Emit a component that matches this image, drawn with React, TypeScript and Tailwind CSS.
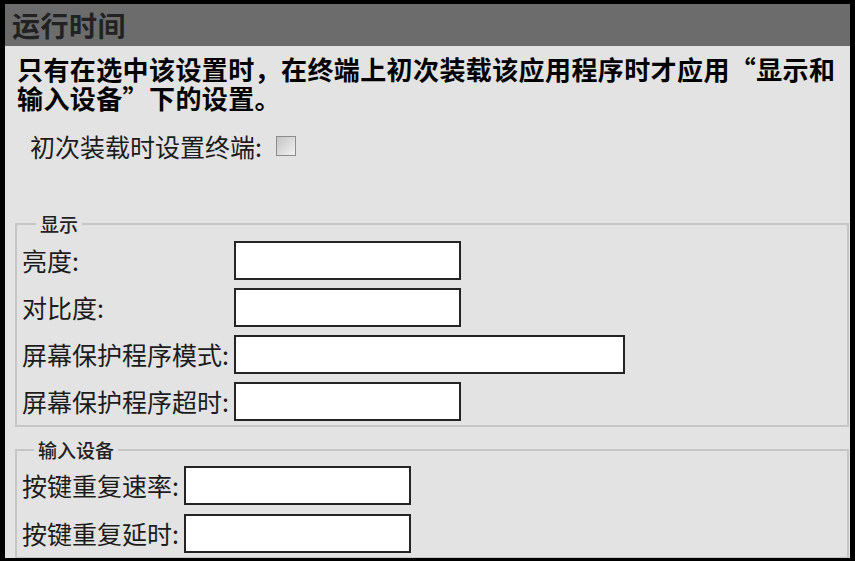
const font = { fontFamily: '"Noto Sans CJK SC", "Noto Sans", sans-serif' };

function Field({ label, wide }: { label: string; wide?: boolean }) {
  return (
    <>
      <div className="flex h-[39px] items-center whitespace-nowrap text-[25px] leading-none text-[#1c1c1c]">
        {label}:
      </div>
      <div className="flex h-[39px] items-center">
        <div
          className={`h-[39px] border-2 border-[#242424] bg-white ${wide ? 'w-[391px]' : 'w-[227px]'}`}
        />
      </div>
    </>
  );
}

export default function App() {
  return (
    <div
      className="h-[561px] w-[855px] overflow-hidden border-t-4 border-r-[5px] border-b-[3px] border-l-[5px] border-black bg-[#e3e3e3]"
      style={font}
    >
      {/* Title bar */}
      <div className="flex h-[42px] items-center bg-[#6c6c6c] pl-[7px] text-[28px] font-bold leading-none tracking-[0.5px] text-[#222]">
        运行时间
      </div>

      <p className="mt-[8px] pl-[12px] text-[26px] font-bold leading-[29px] tracking-[0.4px] text-black">
        只有在选中该设置时，在终端上初次装载该应用程序时才应用“显示和
        <br />
        输入设备”下的设置。
      </p>

      <div className="mt-[19px] flex h-[30px] items-center pl-[25px] text-[25px] leading-none text-[#1c1c1c]">
        <span>初次装载时设置终端:</span>
        <span className="ml-[14px] h-[20px] w-[20px] border border-[#8c8c8c] bg-gradient-to-br from-[#c4c4c4] to-[#f2f2f2]" />
      </div>

      {/* 显示 */}
      <fieldset className="mt-[52px] ml-[10px] mr-[1px] border-2 border-[#c6c6c6] pb-[4px] pl-[5px]">
        <legend className="ml-[14px] px-[4px] text-[19px] font-medium leading-[22px] text-[#222]">显示</legend>
        <div className="grid grid-cols-[auto_1fr] gap-x-[5px] gap-y-[8px] pt-[6px]">
          <Field label="亮度" />
          <Field label="对比度" />
          <Field label="屏幕保护程序模式" wide />
          <Field label="屏幕保护程序超时" />
        </div>
      </fieldset>

      {/* 输入设备 */}
      <fieldset className="mt-[12px] ml-[10px] mr-[1px] border-2 border-[#c6c6c6] pb-[4px] pl-[5px]">
        <legend className="ml-[12px] px-[4px] text-[19px] font-medium leading-[22px] text-[#222]">输入设备</legend>
        <div className="grid grid-cols-[auto_1fr] gap-x-[5px] gap-y-[9px] pt-[5px]">
          <Field label="按键重复速率" />
          <Field label="按键重复延时" />
        </div>
      </fieldset>
    </div>
  );
}
